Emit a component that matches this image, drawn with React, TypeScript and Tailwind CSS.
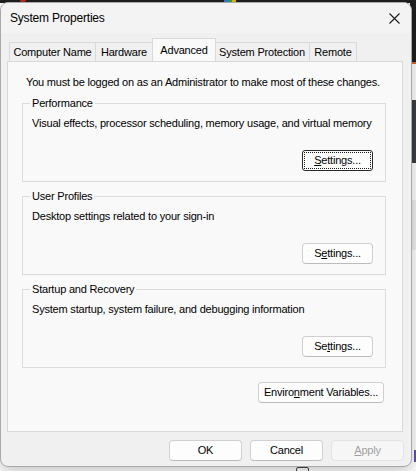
import React from 'react';

const FONT = { fontFamily: '"Liberation Sans", Arial, sans-serif' };

function Btn({
  children,
  className = '',
  disabled = false,
  focused = false,
}: {
  children: React.ReactNode;
  className?: string;
  disabled?: boolean;
  focused?: boolean;
}) {
  if (focused) {
    return (
      <button
        className={`h-[21px] rounded-[3px] border border-[#2b2b2b] bg-[#fdfdfd] p-[1px] text-[11px] tracking-[-0.2px] text-black ${className}`}
      >
        <span className="flex h-full w-full items-center justify-center border border-dotted border-[#1a1a1a]">
          {children}
        </span>
      </button>
    );
  }
  return (
    <button
      disabled={disabled}
      className={`flex h-[21px] items-center justify-center rounded-[4px] border text-[11px] tracking-[-0.2px] ${
        disabled
          ? 'border-[#e3e3e3] bg-[#f6f6f6] text-[#a2a2a2]'
          : 'border-[#d0d0d0] border-b-[#bcbcbc] bg-[#fdfdfd] text-black'
      } ${className}`}
    >
      {children}
    </button>
  );
}

function GroupBox({
  title,
  text,
  button,
}: {
  title: string;
  text: string;
  button: React.ReactNode;
}) {
  return (
    <div className="relative flex h-[79px] w-[364px] flex-col border border-[#dcdcdc] pl-[9px] pr-[12px] pt-[12px] pb-[10px]">
      <span className="absolute left-[7px] top-[-8px] bg-[#f9f9f9] px-[2px] leading-[14px]">{title}</span>
      <p className="leading-[14px]">{text}</p>
      <div className="mt-auto flex justify-end">{button}</div>
    </div>
  );
}

const tabs = [
  { label: 'Computer Name', w: 'w-[87px]' },
  { label: 'Hardware', w: 'w-[57px]' },
  { label: 'Advanced', w: 'w-[64px]', active: true },
  { label: 'System Protection', w: 'w-[95px]' },
  { label: 'Remote', w: 'w-[47px]' },
];

export default function App() {
  return (
    <div className="relative h-[471px] w-[416px] overflow-hidden bg-white" style={FONT}>
      {/* stuff behind the dialog */}
      <div className="absolute left-0 top-0 h-[3px] w-[416px] bg-[#202020]" />
      <div className="absolute left-[20px] top-0 h-[2px] w-[6px] rounded-b-full bg-[#c42b1c]" />
      <div className="absolute left-[224px] top-0 h-[2px] w-[4px] bg-[#2f7fd8]" />
      <div className="absolute left-[228px] top-0 h-[2px] w-[4px] bg-[#3aa14a]" />
      <div className="absolute left-[232px] top-0 h-[2px] w-[4px] bg-[#f2b70c]" />
      <div className="absolute right-0 top-0 h-[62px] w-[6px] bg-[#1f1f1f]" />
      <div className="absolute right-0 top-[62px] h-[2px] w-[6px] bg-[#e2651c]" />
      <div className="absolute right-0 top-[100px] h-[63px] w-[6px] bg-[#3b3f44]" />
      <div className="absolute right-0 top-[200px] h-[50px] w-[6px] bg-[#f0f0f0]" />
      <div className="absolute right-0 top-[450px] h-[12px] w-[2px] bg-[#5b4fc4]" />
      <div className="absolute left-[296px] top-[467px] h-[10px] w-[13px] rounded-[2px] border border-[#444]" />

      {/* dialog window */}
      <div className="absolute left-0 top-[2px] flex h-[465px] w-[412px] flex-col overflow-hidden rounded-[8px] border border-[#a9a9a9] bg-[#f0f0f0] text-[11px] text-black shadow-[0_4px_16px_rgba(0,0,0,0.25)]">
        <div className="flex h-[30px] shrink-0 items-center justify-between bg-[#f3f3f3] pl-[9px] pr-[10px]">
          <span className="text-[12px] tracking-[-0.2px]">System Properties</span>
          <svg width="11" height="11" viewBox="0 0 11 11" className="mr-[1px]">
            <path d="M0.5 0.5 L10.5 10.5 M10.5 0.5 L0.5 10.5" stroke="#1a1a1a" strokeWidth="1.1" />
          </svg>
        </div>

        {/* tabs */}
        <div className="mt-[6px] flex h-[22px] items-end pl-[8px] tracking-[-0.2px]">
          {tabs.map((t) =>
            t.active ? (
              <div
                key={t.label}
                className={`relative z-10 -mx-[1px] flex h-[23px] ${t.w} items-start justify-center border border-b-0 border-[#d9d9d9] bg-[#f9f9f9] pt-[3px]`}
              >
                {t.label}
              </div>
            ) : (
              <div
                key={t.label}
                className={`flex h-[19px] ${t.w} items-center justify-center border border-b-0 border-l-0 border-[#d9d9d9] bg-[#f0f0f0] pt-[1px] first:border-l`}
              >
                {t.label}
              </div>
            )
          )}
        </div>

        {/* tab page */}
        <div className="ml-[6px] flex h-[371px] w-[396px] flex-col border border-[#d9d9d9] bg-[#f9f9f9] pl-[14px] tracking-[-0.2px]">
          <p className="mt-[13px] pl-[4px] leading-[14px]">
            You must be logged on as an Administrator to make most of these changes.
          </p>

          <div className="mt-[14px] flex flex-col gap-[14px]">
            <GroupBox
              title="Performance"
              text="Visual effects, processor scheduling, memory usage, and virtual memory"
              button={
                <Btn focused className="w-[71px]">
                  <u className="no-underline"><span className="underline">S</span>ettings...</u>
                </Btn>
              }
            />
            <GroupBox
              title="User Profiles"
              text="Desktop settings related to your sign-in"
              button={
                <Btn className="w-[71px]">
                  S<span className="underline">e</span>ttings...
                </Btn>
              }
            />
            <GroupBox
              title="Startup and Recovery"
              text="System startup, system failure, and debugging information"
              button={
                <Btn className="w-[71px]">
                  Se<span className="underline">t</span>tings...
                </Btn>
              }
            />
          </div>

          <div className="mt-[14px] flex w-[362px] justify-end">
            <Btn className="w-[126px]">
              Enviro<span className="underline">n</span>ment Variables...
            </Btn>
          </div>
        </div>

        {/* dialog buttons */}
        <div className="mt-[8px] flex justify-end gap-[8px] pr-[7px]">
          <Btn className="w-[73px]">OK</Btn>
          <Btn className="w-[73px]">Cancel</Btn>
          <Btn disabled className="w-[73px]">
            <span className="underline">A</span>pply
          </Btn>
        </div>
      </div>
    </div>
  );
}
